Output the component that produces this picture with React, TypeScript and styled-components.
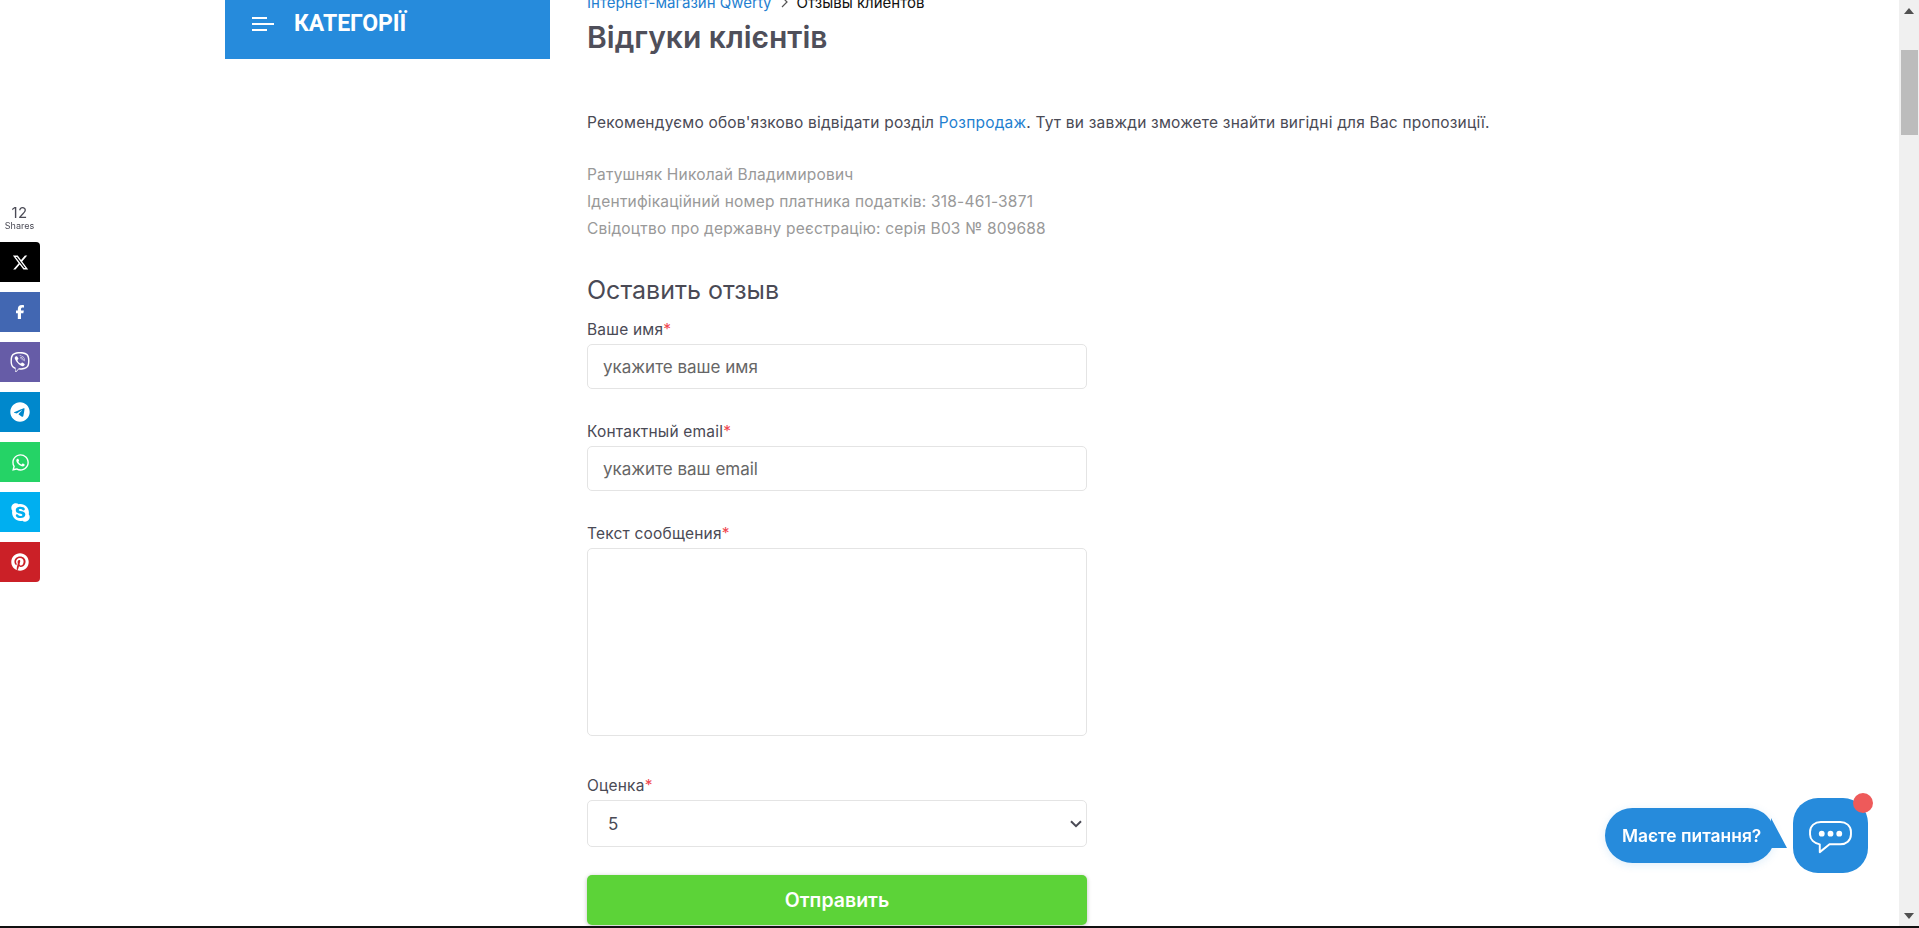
import styled, { createGlobalStyle } from "styled-components";
import {
  FaFacebookF,
  FaViber,
  FaTelegram,
  FaWhatsapp,
  FaSkype,
  FaPinterest,
} from "react-icons/fa6";

const GlobalStyle = createGlobalStyle`
  html, body {
    margin: 0;
    padding: 0;
    height: 100%;
    overflow: hidden;
    background: #fff;
  }
  * {
    box-sizing: border-box;
  }
`;

// the X logo here is the thin outlined one, fa6 renders too heavy at this size
const XLogo = () => (
  <svg width="17" height="17" viewBox="0 0 24 24" fill="#fff">
    <path d="M18.244 2.25h3.308l-7.227 8.26 8.502 11.24H16.17l-5.214-6.817L4.99 21.75H1.68l7.73-8.835L1.254 2.25H8.08l4.713 6.231zm-1.161 17.52h1.833L7.084 4.126H5.117z" />
  </svg>
);

const shares = [
  { name: "x", color: "#000000", size: 16, icon: <XLogo /> },
  { name: "facebook", color: "#4267b2", size: 14, icon: <FaFacebookF /> },
  { name: "viber", color: "#665ca7", size: 20, icon: <FaViber /> },
  { name: "telegram", color: "#0088cc", size: 20, icon: <FaTelegram /> },
  { name: "whatsapp", color: "#25d366", size: 19, icon: <FaWhatsapp /> },
  { name: "skype", color: "#00aff0", size: 21, icon: <FaSkype /> },
  { name: "pinterest", color: "#cb2027", size: 18, icon: <FaPinterest /> },
];

const App = () => {
  return (
    <Screen>
      <GlobalStyle />
      <Viewport>
        <Page>
          <Sidebar>
            <CategoryBar>
              <MenuIcon width="24" height="14" viewBox="0 0 24 14">
                <rect x="0" y="0" width="15" height="2" fill="#fff" />
                <rect x="0" y="6" width="22" height="2" fill="#fff" />
                <rect x="0" y="12" width="15" height="2" fill="#fff" />
              </MenuIcon>
              <CategoryTitle>КАТЕГОРІЇ</CategoryTitle>
            </CategoryBar>
          </Sidebar>
          <Main>
            <Breadcrumbs>
              <BlueLink>Інтернет-магазин Qwerty</BlueLink>
              <Crumb>
                <svg width="7" height="12" viewBox="0 0 7 12">
                  <path d="M1 1l5 5-5 5" fill="none" stroke="#555" strokeWidth="1.2" />
                </svg>
              </Crumb>
              <span>Отзывы клиентов</span>
            </Breadcrumbs>
            <PageTitle>Відгуки клієнтів</PageTitle>
            <Intro>
              Рекомендуємо обов'язково відвідати розділ <BlueLink>Розпродаж</BlueLink>. Тут ви завжди
              зможете знайти вигідні для Вас пропозиції.
            </Intro>
            <Requisites>
              <div>Ратушняк Николай Владимирович</div>
              <div>Ідентифікаційний номер платника податків: 318-461-3871</div>
              <div>Свідоцтво про державну реєстрацію: серія В03 № 809688</div>
            </Requisites>
            <FormTitle>Оставить отзыв</FormTitle>
            <Form>
              <Field>
                <Label>
                  Ваше имя<Star>*</Star>
                </Label>
                <TextInput placeholder="укажите ваше имя" />
              </Field>
              <Field>
                <Label>
                  Контактный email<Star>*</Star>
                </Label>
                <TextInput placeholder="укажите ваш email" />
              </Field>
              <Field $wide>
                <Label>
                  Текст сообщения<Star>*</Star>
                </Label>
                <TextArea />
              </Field>
              <Field>
                <Label>
                  Оценка<Star>*</Star>
                </Label>
                <SelectWrap>
                  <Select defaultValue="5">
                    <option>5</option>
                    <option>4</option>
                    <option>3</option>
                    <option>2</option>
                    <option>1</option>
                  </Select>
                  <SelectChevron width="12" height="8" viewBox="0 0 12 8">
                    <path d="M1 1.2l5 5 5-5" fill="none" stroke="#4a4a55" strokeWidth="2" />
                  </SelectChevron>
                </SelectWrap>
              </Field>
              <SubmitButton type="button">Отправить</SubmitButton>
            </Form>
          </Main>
        </Page>
        <Scrollbar>
          <ScrollArrow viewBox="0 0 10 6" width="10" height="6">
            <path d="M5 0l5 6H0z" fill="#505050" />
          </ScrollArrow>
          <ScrollThumb />
          <ScrollSpacer />
          <ScrollArrow viewBox="0 0 10 6" width="10" height="6">
            <path d="M0 0h10L5 6z" fill="#505050" />
          </ScrollArrow>
        </Scrollbar>
      </Viewport>

      <ShareBar>
        <ShareCount>
          <strong>12</strong>
          <span>Shares</span>
        </ShareCount>
        {shares.map((s) => (
          <ShareButton key={s.name} $color={s.color} $size={s.size}>
            {s.icon}
          </ShareButton>
        ))}
      </ShareBar>

      <ChatWidget>
        <ChatBubble>
          Маєте питання?
          <BubbleTail width="16" height="30" viewBox="0 0 16 30">
            <path d="M0 0l16 30H0z" fill="#268bdc" />
          </BubbleTail>
        </ChatBubble>
        <ChatButton>
          <svg width="45" height="37" viewBox="0 0 46 38" fill="none">
            <path
              d="M13 2h20c6 0 11 4 11 10v3c0 6-5 10-11 10H22l-10 8v-8c-6-1-10-5-10-10v-3C2 6 7 2 13 2z"
              stroke="#fff"
              strokeWidth="2"
              strokeLinejoin="round"
            />
            <circle cx="14" cy="14" r="3" fill="#fff" />
            <circle cx="23" cy="14" r="3" fill="#fff" />
            <circle cx="32" cy="14" r="3" fill="#fff" />
          </svg>
          <ChatDot />
        </ChatButton>
      </ChatWidget>
    </Screen>
  );
};

export default App;

const Screen = styled.div`
  height: 928px;
  width: 1919px;
  border-bottom: 2px solid #111;
  font-family: "Inter", "Noto Sans", sans-serif;
  color: #4a4a55;
  overflow: hidden;
`;

const Viewport = styled.div`
  display: flex;
  height: 926px;
`;

const Page = styled.div`
  flex: 1;
  display: flex;
  align-items: flex-start;
  padding-left: 225px;
  overflow: hidden;
`;

const Sidebar = styled.aside`
  width: 325px;
  flex-shrink: 0;
`;

const CategoryBar = styled.div`
  height: 59px;
  background: #268bdc;
  display: flex;
  align-items: center;
  padding: 0 0 12px 27px;
  color: #fff;
`;

const MenuIcon = styled.svg`
  margin-right: 18px;
`;

const CategoryTitle = styled.span`
  font-family: "Roboto", sans-serif;
  font-size: 23px;
  font-weight: 700;
`;

const Main = styled.main`
  margin-left: 37px;
  margin-top: -8px;
  width: 1000px;
`;

const Breadcrumbs = styled.div`
  display: flex;
  align-items: center;
  height: 20px;
  font-size: 15px;
  color: #111;
`;

const Crumb = styled.span`
  display: inline-flex;
  margin: 0 9px;
`;

const BlueLink = styled.a`
  color: #1f7fd0;
`;

const PageTitle = styled.h1`
  margin: 7px 0 0;
  font-size: 30px;
  line-height: 36px;
  font-weight: 600;
  color: #4f4f5a;
`;

const Intro = styled.p`
  margin: 54px 0 0;
  font-size: 15.5px;
  letter-spacing: 0.2px;
  line-height: 27px;
  color: #4a4a55;
`;

const Requisites = styled.div`
  margin-top: 25px;
  font-size: 15.5px;
  letter-spacing: 0.2px;
  line-height: 27px;
  color: #999;
`;

const FormTitle = styled.h2`
  margin: 33px 0 0;
  font-size: 25px;
  line-height: 30px;
  font-weight: 400;
  color: #4a4a55;
`;

const Form = styled.form`
  display: flex;
  flex-direction: column;
  width: 500px;
  margin-top: 14px;
`;

const Field = styled.div<{ $wide?: boolean }>`
  margin-bottom: ${(p) => (p.$wide ? "39px" : "32px")};
`;

const Label = styled.label`
  display: block;
  height: 25px;
  font-size: 15.5px;
  letter-spacing: 0.2px;
  line-height: 21px;
  color: #4a4a55;
`;

const Star = styled.span`
  color: #f0474f;
`;

const controlCss = `
  display: block;
  width: 100%;
  border: 1px solid #e4e4e4;
  border-radius: 5px;
  background: #fff;
  font-family: "Inter", "Noto Sans", sans-serif;
  font-size: 17px;
  color: #4a4a55;
  outline: none;
`;

const TextInput = styled.input`
  ${controlCss}
  height: 45px;
  padding: 0 15px;

  &::placeholder {
    color: #666;
    opacity: 1;
  }
`;

const TextArea = styled.textarea`
  ${controlCss}
  height: 188px;
  padding: 12px 15px;
  resize: none;
`;

const SelectWrap = styled.div`
  position: relative;
`;

const Select = styled.select`
  ${controlCss}
  height: 47px;
  padding: 0 20px;
  appearance: none;
`;

const SelectChevron = styled.svg`
  position: absolute;
  right: 5px;
  top: 20px;
  pointer-events: none;
`;

const SubmitButton = styled.button`
  height: 50px;
  margin-top: -4px;
  border: none;
  border-radius: 5px;
  background: #5cd338;
  box-shadow: 0 1px 4px rgba(0, 0, 0, 0.25);
  color: #fff;
  font-family: "Inter", sans-serif;
  font-size: 19.5px;
  font-weight: 600;
`;

const Scrollbar = styled.div`
  width: 20px;
  flex-shrink: 0;
  background: #f0f0f0;
  display: flex;
  flex-direction: column;
  align-items: center;
  padding: 8px 0 7px;
`;

const ScrollArrow = styled.svg`
  flex-shrink: 0;
`;

const ScrollThumb = styled.div`
  width: 17px;
  height: 85px;
  margin-top: 36px;
  background: #bcbcbc;
`;

const ScrollSpacer = styled.div`
  flex: 1;
`;

const ShareBar = styled.div`
  position: fixed;
  left: 0;
  top: 205px;
  width: 40px;
  display: flex;
  flex-direction: column;
  gap: 10px;
`;

const ShareCount = styled.div`
  display: flex;
  flex-direction: column;
  align-items: center;
  height: 27px;
  line-height: 1;
  margin-left: -1px;
  color: #4a4a55;

  strong {
    font-size: 15px;
    font-weight: 400;
    letter-spacing: 0.5px;
  }
  span {
    font-size: 9px;
    margin-top: 1px;
  }
`;

const ShareButton = styled.a<{ $color: string; $size: number }>`
  display: flex;
  align-items: center;
  justify-content: center;
  height: 40px;
  background: ${(p) => p.$color};
  color: #fff;
  font-size: ${(p) => p.$size}px;

  &:first-of-type {
    border-top-right-radius: 4px;
  }
  &:last-of-type {
    border-bottom-right-radius: 4px;
  }
`;

const ChatWidget = styled.div`
  position: fixed;
  left: 1605px;
  top: 798px;
  display: flex;
  align-items: center;
`;

const ChatBubble = styled.div`
  position: relative;
  width: 170px;
  height: 55px;
  margin-right: 18px;
  border-radius: 28px;
  background: #268bdc;
  box-shadow: 0 2px 8px rgba(38, 139, 220, 0.15);
  display: flex;
  align-items: center;
  padding-left: 17px;
  color: #fff;
  font-size: 17.4px;
  font-weight: 600;
  white-space: nowrap;
`;

const BubbleTail = styled.svg`
  position: absolute;
  right: -12px;
  top: 10px;
`;

const ChatButton = styled.div`
  position: relative;
  width: 75px;
  height: 75px;
  border-radius: 25px;
  background: #268bdc;
  display: flex;
  align-items: center;
  justify-content: center;
  padding-top: 6px;
`;

const ChatDot = styled.span`
  position: absolute;
  right: -5px;
  top: -5px;
  width: 20px;
  height: 20px;
  border-radius: 50%;
  background: #ee5a5a;
`;
